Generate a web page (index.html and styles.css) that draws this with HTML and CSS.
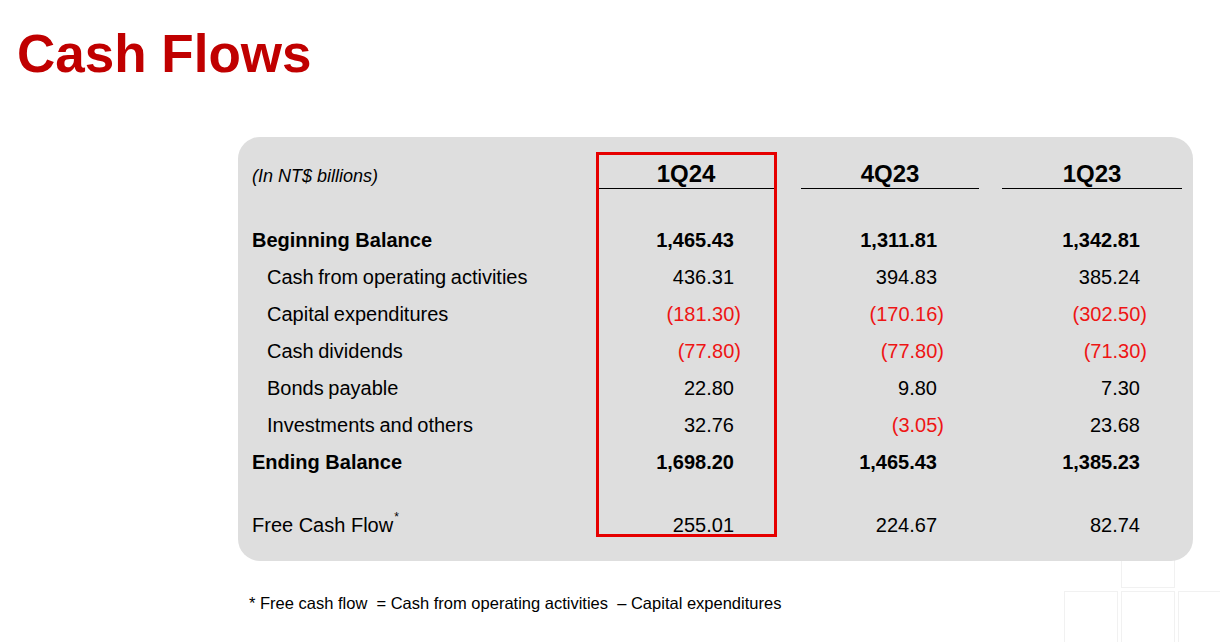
FILE: index.html
```html
<!DOCTYPE html>
<html lang="en">
<head>
<meta charset="utf-8">
<title>Cash Flows</title>
<link rel="stylesheet" href="styles.css">
</head>
<body>
<div class="deco">
  <div class="sq sq-a"></div>
  <div class="sq sq-b"></div>
  <div class="sq sq-c"></div>
  <div class="sq sq-d"></div>
</div>
<main class="slide">
  <h1 class="title">Cash Flows</h1>
  <section class="panel">
    <div class="row head">
      <div class="lab unit">(In NT$ billions)</div>
      <div class="qh">1Q24</div>
      <div class="qh q2">4Q23</div>
      <div class="qh">1Q23</div>
    </div>
    <div class="body">
      <div class="row bold">
        <div class="lab">Beginning Balance</div>
        <div class="num">1,465.43</div>
        <div class="num">1,311.81</div>
        <div class="num">1,342.81</div>
      </div>
      <div class="row">
        <div class="lab sub">Cash from operating activities</div>
        <div class="num">436.31</div>
        <div class="num">394.83</div>
        <div class="num">385.24</div>
      </div>
      <div class="row">
        <div class="lab sub">Capital expenditures</div>
        <div class="num"><span class="neg">(181.30)</span></div>
        <div class="num"><span class="neg">(170.16)</span></div>
        <div class="num"><span class="neg">(302.50)</span></div>
      </div>
      <div class="row">
        <div class="lab sub">Cash dividends</div>
        <div class="num"><span class="neg">(77.80)</span></div>
        <div class="num"><span class="neg">(77.80)</span></div>
        <div class="num"><span class="neg">(71.30)</span></div>
      </div>
      <div class="row">
        <div class="lab sub">Bonds payable</div>
        <div class="num">22.80</div>
        <div class="num">9.80</div>
        <div class="num">7.30</div>
      </div>
      <div class="row">
        <div class="lab sub">Investments and others</div>
        <div class="num">32.76</div>
        <div class="num"><span class="neg">(3.05)</span></div>
        <div class="num">23.68</div>
      </div>
      <div class="row bold">
        <div class="lab">Ending Balance</div>
        <div class="num">1,698.20</div>
        <div class="num">1,465.43</div>
        <div class="num">1,385.23</div>
      </div>
      <div class="row fcf">
        <div class="lab">Free Cash Flow<sup class="star">*</sup></div>
        <div class="num">255.01</div>
        <div class="num">224.67</div>
        <div class="num">82.74</div>
      </div>
    </div>
    <div class="highlight"></div>
  </section>
  <p class="note">* Free cash flow &nbsp;= Cash from operating activities &nbsp;– Capital expenditures</p>
</main>
</body>
</html>
```

FILE: styles.css
```css
html, body {
  margin: 0;
  padding: 0;
  background: #ffffff;
}

body {
  width: 1220px;
  height: 642px;
  overflow: hidden;
  position: relative;
  font-family: "Liberation Sans", Arial, sans-serif;
  color: #000000;
}

.deco {
  position: absolute;
  inset: 0;
  z-index: 0;
}

.sq {
  position: absolute;
  box-sizing: border-box;
  border: 1.5px solid #f1f1f1;
  background: #ffffff;
}

.sq-a { left: 1121px; top: 520px; width: 54px; height: 68px; }
.sq-b { left: 1064px; top: 591px; width: 54px; height: 70px; }
.sq-c { left: 1121px; top: 591px; width: 54px; height: 70px; }
.sq-d { left: 1178px; top: 591px; width: 54px; height: 70px; }

.slide {
  position: relative;
  z-index: 1;
  padding-top: 27px;
}

.title {
  margin: 0 0 0 17px;
  font-size: 53px;
  line-height: 53px;
  font-weight: bold;
  color: #c00000;
}

.panel {
  position: relative;
  box-sizing: border-box;
  margin: 57px 0 0 238px;
  width: 955px;
  height: 424px;
  padding-top: 24px;
  background: #dedede;
  border-radius: 22px;
}

.row {
  display: grid;
  grid-template-columns: 335px 176px 178px 180px;
  column-gap: 25px;
  align-items: center;
  height: 37px;
  font-size: 20px;
}

.row.head {
  height: 26px;
  align-items: stretch;
}

.unit {
  font-size: 18px;
  font-style: italic;
  line-height: 26px;
  padding-top: 2px;
  padding-left: 12px;
}

.qh {
  font-size: 24px;
  font-weight: bold;
  line-height: 26px;
  text-align: center;
  border-bottom: 1.6px solid #000000;
}

.qh.q2 {
  margin-left: 2px;
  margin-right: -2px;
}

.body {
  margin-top: 35px;
}

.lab {
  padding-left: 14px;
  white-space: nowrap;
}

.lab.sub {
  padding-left: 29px;
  word-spacing: -1px;
}

.row.bold {
  font-weight: bold;
}

.num {
  text-align: right;
  padding-right: 40px;
}

.num:last-child {
  padding-right: 42px;
}

.neg {
  color: #ee1515;
  margin-right: -7px;
}

.row.fcf {
  margin-top: 26px;
}

.star {
  font-size: 12px;
  vertical-align: top;
  position: relative;
  top: -4px;
  margin-left: 1px;
}

.highlight {
  position: absolute;
  left: 358px;
  top: 15px;
  width: 181px;
  height: 385px;
  box-sizing: border-box;
  border: 3px solid #e60000;
  pointer-events: none;
}

.note {
  margin: 32px 0 0 249px;
  font-size: 16.5px;
  line-height: 20px;
  white-space: nowrap;
}
```
